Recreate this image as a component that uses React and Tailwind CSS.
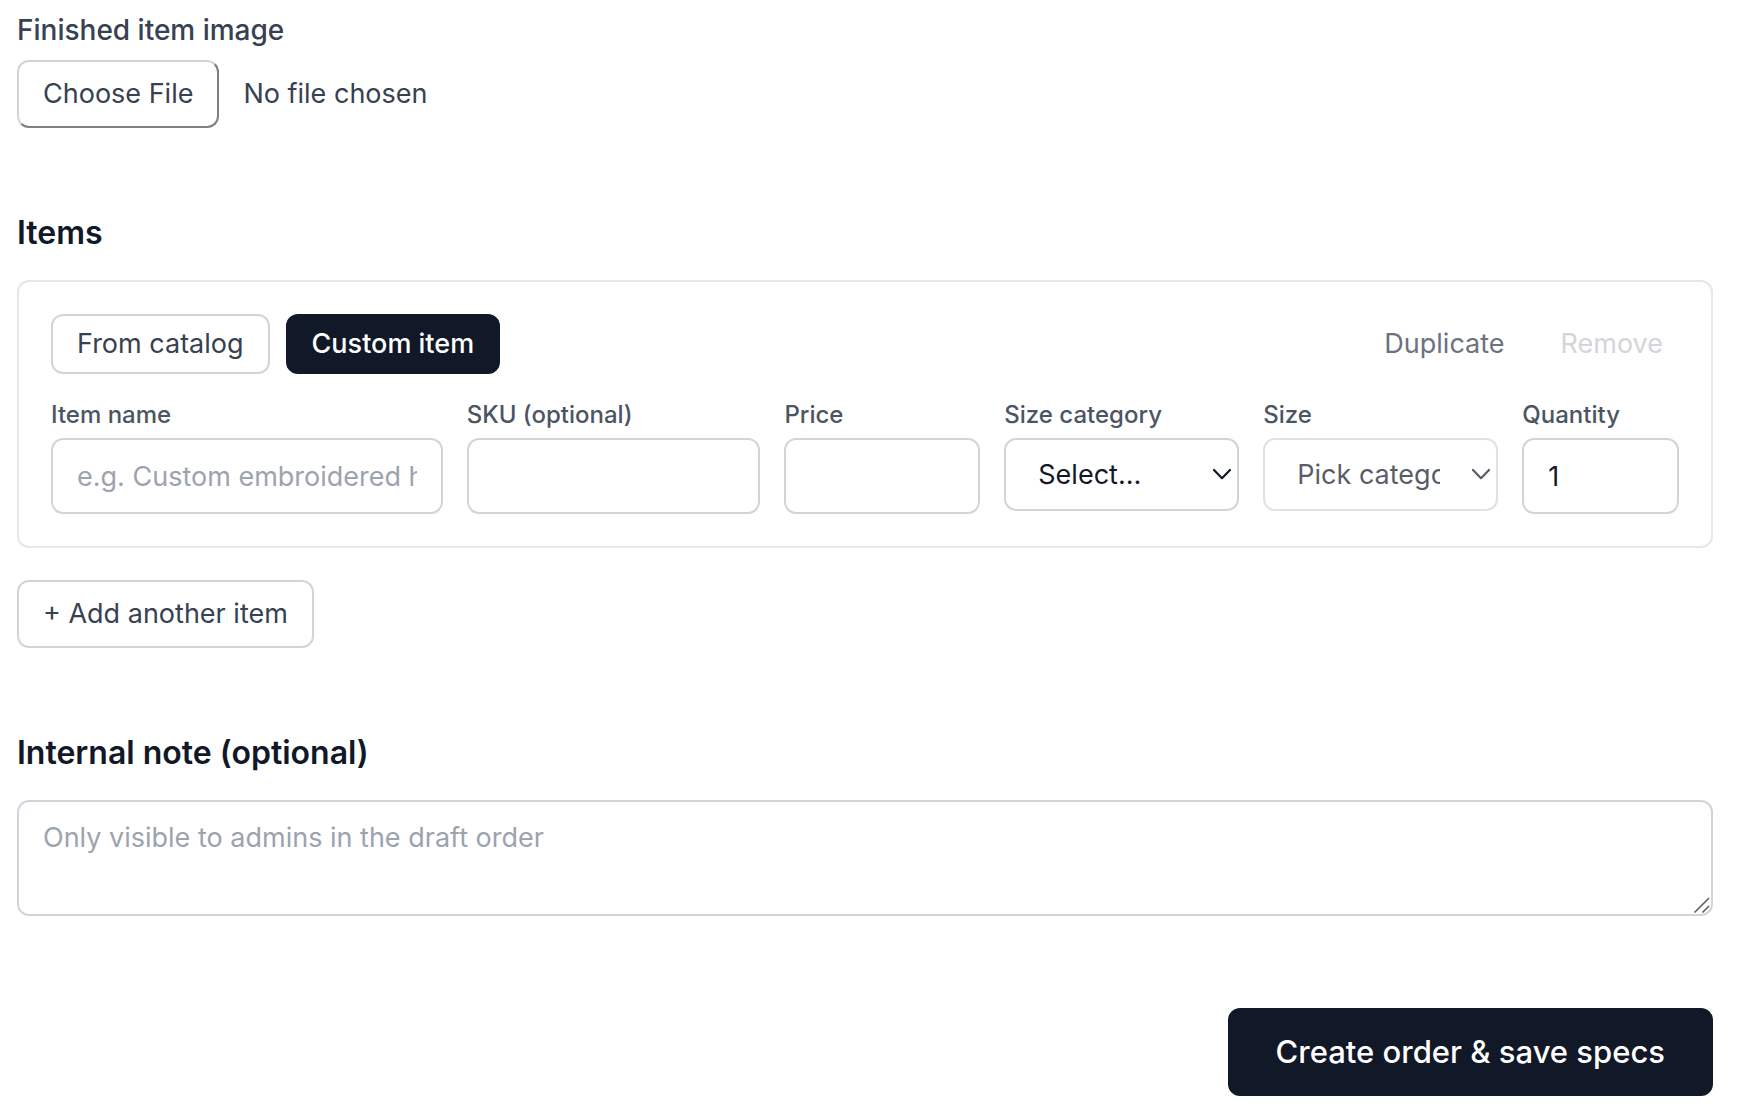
import { useState } from "react";

const inputClass =
  "w-full h-[76px] rounded-xl border-2 border-[#d1d5db] bg-white px-6 text-[27px] leading-10 text-[#111827] placeholder:text-[#9ca3af] placeholder:opacity-100";

function Field({ id, label, children }) {
  return (
    <div className="flex min-w-0 flex-col gap-1.5">
      <label htmlFor={id} className="text-2xl leading-[34px] font-medium whitespace-nowrap text-[#4b5563]">
        {label}
      </label>
      {children}
    </div>
  );
}

function SelectBox({ id, disabled, children }) {
  return (
    <div className={disabled ? "relative opacity-70" : "relative"}>
      <select
        id={id}
        disabled={disabled}
        className="block h-[73px] w-full appearance-none rounded-xl border-2 border-[#d1d5db] bg-white pr-14 pl-8 text-[27px] leading-10 text-[#111827] opacity-100"
      >
        {children}
      </select>
      <svg
        className="pointer-events-none absolute top-[30px] right-[7px] h-3 w-5"
        viewBox="0 0 20 12"
        fill="none"
        stroke="#111827"
        strokeWidth="2.2"
        strokeLinecap="round"
        strokeLinejoin="round"
        aria-hidden="true"
      >
        <path d="M2 2l8 8.2L18 2" />
      </svg>
    </div>
  );
}

export default function App() {
  const [mode, setMode] = useState("custom");
  const tab = "rounded-xl border-2 px-6 py-2 text-[27px] leading-10 whitespace-nowrap";
  const tabOn = "border-[#111827] bg-[#111827] font-medium text-white";
  const tabOff = "border-[#d1d5db] bg-white text-[#374151]";

  return (
    <form
      className="flex flex-col gap-20 bg-white pt-2.5 pr-[25px] pb-[18px] pl-[17px] font-['Inter',sans-serif]"
      onSubmit={(e) => e.preventDefault()}
    >
      <div className="flex flex-col items-start gap-2.5">
        <label htmlFor="image" className="text-[28px] leading-10 font-medium text-[#374151]">
          Finished item image
        </label>
        <input
          id="image"
          type="file"
          className="block w-full text-[27px] leading-10 text-[#374151] file:mr-6 file:rounded-xl file:border-2 file:border-t-[#d1d5db] file:border-r-[#7f7f84] file:border-b-[#7f7f84] file:border-l-[#d1d5db] file:bg-white file:px-6 file:py-3 file:text-[27px] file:leading-10 file:text-[#374151]"
        />
      </div>

      <section>
        <h2 className="mb-[22px] text-[32px] leading-[50px] font-semibold text-[#111827]">Items</h2>
        <div className="rounded-xl border-2 border-[#e5e7eb] p-8">
          <div className="mb-6 flex items-center justify-between">
            <div className="flex gap-4">
              <button type="button" onClick={() => setMode("catalog")} className={`${tab} ${mode === "catalog" ? tabOn : tabOff}`}>
                From catalog
              </button>
              <button type="button" onClick={() => setMode("custom")} className={`${tab} ${mode === "custom" ? tabOn : tabOff}`}>
                Custom item
              </button>
            </div>
            <div className="flex gap-6">
              <button type="button" className="px-4 py-2 text-[27px] leading-10 text-[#6b7280]">
                Duplicate
              </button>
              <button type="button" disabled className="px-4 py-2 text-[27px] leading-10 text-[#d3d5d9]">
                Remove
              </button>
            </div>
          </div>
          <div className="grid grid-cols-[2fr_1.5fr_1fr_1.2fr_1.2fr_0.8fr] items-start gap-6">
            <Field id="name" label="Item name">
              <input id="name" type="text" placeholder="e.g. Custom embroidered hoodie" className={inputClass} />
            </Field>
            <Field id="sku" label="SKU (optional)">
              <input id="sku" type="text" className={inputClass} />
            </Field>
            <Field id="price" label="Price">
              <input id="price" type="text" inputMode="decimal" className={inputClass} />
            </Field>
            <Field id="category" label="Size category">
              <SelectBox id="category">
                <option>Select…</option>
              </SelectBox>
            </Field>
            <Field id="size" label="Size">
              <SelectBox id="size" disabled>
                <option>Pick category first</option>
              </SelectBox>
            </Field>
            <Field id="quantity" label="Quantity">
              <input id="quantity" type="number" min="1" defaultValue="1" className={inputClass} />
            </Field>
          </div>
        </div>
        <button
          type="button"
          className="mt-8 block rounded-xl border-2 border-[#d1d5db] bg-white px-6 py-3 text-[27px] leading-10 text-[#374151]"
        >
          + Add another item
        </button>
      </section>

      <section>
        <h2 className="mb-[22px] text-[32px] leading-[50px] font-semibold text-[#111827]">
          <label htmlFor="note">Internal note (optional)</label>
        </h2>
        <div className="relative mb-3">
          <textarea
            id="note"
            placeholder="Only visible to admins in the draft order"
            className="block h-[116px] w-full rounded-xl border-2 border-[#d1d5db] bg-white px-6 py-4 text-[27px] leading-10 text-[#111827] placeholder:text-[#9ca3af] placeholder:opacity-100 [&::-webkit-resizer]:hidden"
          />
          <svg
            className="pointer-events-none absolute right-[3px] bottom-[3px] size-4"
            viewBox="0 0 16 16"
            fill="none"
            stroke="#55585c"
            strokeWidth="1.5"
            aria-hidden="true"
          >
            <path d="M.5 15.5L15 1M8.5 15.5L15 9" />
          </svg>
        </div>
      </section>

      <button
        type="submit"
        className="self-end rounded-xl bg-[#111827] px-12 py-5 text-[31px] leading-[48px] font-medium text-white"
      >
        Create order &amp; save specs
      </button>
    </form>
  );
}
